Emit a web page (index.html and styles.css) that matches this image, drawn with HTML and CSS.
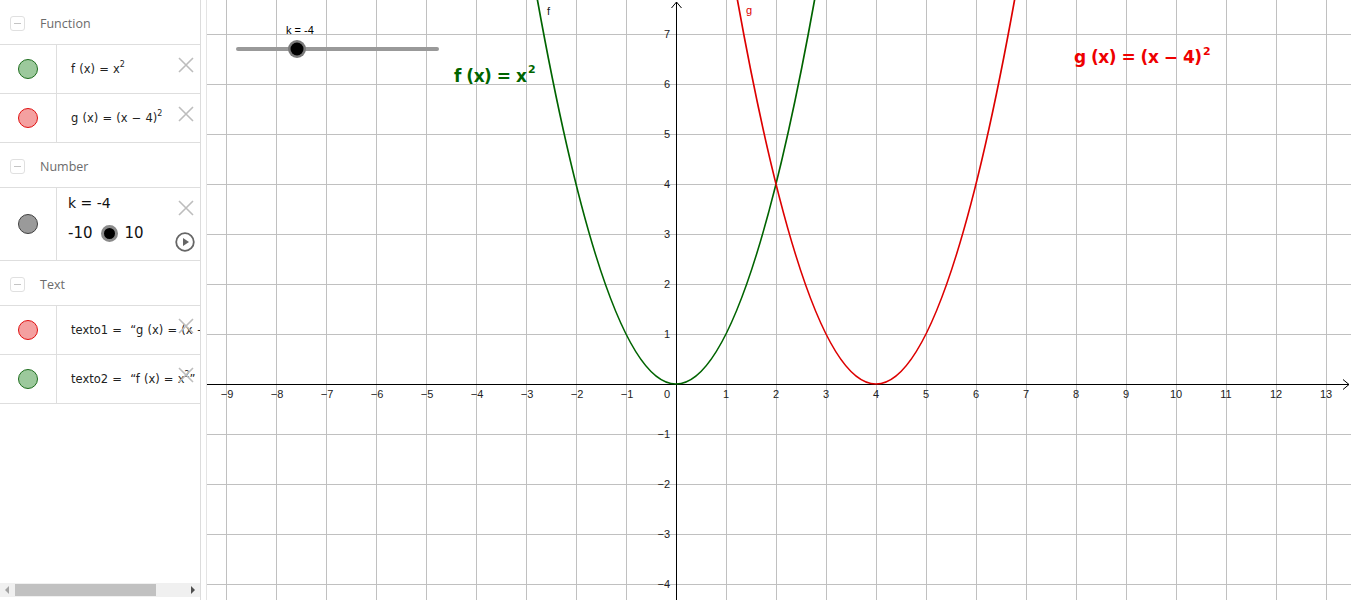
FILE: index.html
```html
<!DOCTYPE html>
<html>
<head>
<meta charset="utf-8">
<link rel="stylesheet" href="styles.css">
</head>
<body>
<div class="app">
  <aside class="algebra">
    <div class="list">
      <div class="group-header"><span class="collapse"></span><span class="group-title">Function</span></div>
      <div class="item">
        <div class="marker"><span class="dot dot-green"></span></div>
        <div class="expr">f (x) = x<sup>2</sup></div>
        <svg class="del" viewBox="0 0 16 16"><path d="M1 1L15 15M15 1L1 15"/></svg>
      </div>
      <div class="item">
        <div class="marker"><span class="dot dot-red"></span></div>
        <div class="expr">g (x) = (x − 4)<sup>2</sup></div>
        <svg class="del" viewBox="0 0 16 16"><path d="M1 1L15 15M15 1L1 15"/></svg>
      </div>
      <div class="group-header"><span class="collapse"></span><span class="group-title">Number</span></div>
      <div class="item item-slider">
        <div class="marker"><span class="dot dot-gray"></span></div>
        <div class="slider-expr">
          <div class="k-line">k = -4</div>
          <div class="range-line"><span>-10</span><span class="knob"></span><span>10</span></div>
        </div>
        <svg class="del" viewBox="0 0 16 16"><path d="M1 1L15 15M15 1L1 15"/></svg>
        <svg class="play" viewBox="0 0 20 20"><circle cx="10" cy="10" r="8.8"/><path d="M8 6L14 10L8 14Z"/></svg>
      </div>
      <div class="group-header"><span class="collapse"></span><span class="group-title">Text</span></div>
      <div class="item">
        <div class="marker"><span class="dot dot-red"></span></div>
        <div class="expr">texto1 =  “g (x) = (x − 4)<sup>2</sup>”</div>
        <svg class="del" viewBox="0 0 16 16"><path d="M1 1L15 15M15 1L1 15"/></svg>
      </div>
      <div class="item">
        <div class="marker"><span class="dot dot-green"></span></div>
        <div class="expr">texto2 =  “f (x) = x<sup>2</sup>”</div>
        <svg class="del" viewBox="0 0 16 16"><path d="M1 1L15 15M15 1L1 15"/></svg>
      </div>
    </div>
    <div class="hscroll">
      <span class="arrow-left"></span>
      <span class="thumb"></span>
      <span class="arrow-right"></span>
    </div>
  </aside>
  <div class="splitter"></div>
  <main class="graphics">
    <svg class="canvas" width="1144" height="600" viewBox="208 0 1144 600">
      <path class="grid" d="M227.5 0V600M277.5 0V600M327.5 0V600M377.5 0V600M427.5 0V600M477.5 0V600M527.5 0V600M577.5 0V600M627.5 0V600M727.5 0V600M777.5 0V600M827.5 0V600M877.5 0V600M927.5 0V600M977.5 0V600M1027.5 0V600M1077.5 0V600M1127.5 0V600M1177.5 0V600M1227.5 0V600M1277.5 0V600M1327.5 0V600M208 34.5H1352M208 84.5H1352M208 134.5H1352M208 184.5H1352M208 234.5H1352M208 284.5H1352M208 334.5H1352M208 434.5H1352M208 484.5H1352M208 534.5H1352M208 584.5H1352"/>
      <path class="axis" d="M208 384.5H1350M1344 379.5L1350 384.5L1344 389.5M677.5 600V2M672.5 8L677.5 2L682.5 8"/>
      <g class="xlabels">
        <text x="228" y="398">−9</text>
        <text x="278" y="398">−8</text>
        <text x="328" y="398">−7</text>
        <text x="378" y="398">−6</text>
        <text x="428" y="398">−5</text>
        <text x="478" y="398">−4</text>
        <text x="528" y="398">−3</text>
        <text x="578" y="398">−2</text>
        <text x="628" y="398">−1</text>
        <text x="668" y="398">0</text>
        <text x="727" y="398">1</text>
        <text x="777" y="398">2</text>
        <text x="827" y="398">3</text>
        <text x="877" y="398">4</text>
        <text x="927" y="398">5</text>
        <text x="977" y="398">6</text>
        <text x="1027" y="398">7</text>
        <text x="1077" y="398">8</text>
        <text x="1127" y="398">9</text>
        <text x="1177" y="398">10</text>
        <text x="1227" y="398">11</text>
        <text x="1277" y="398">12</text>
        <text x="1327" y="398">13</text>
      </g>
      <g class="ylabels">
        <text x="671" y="38">7</text>
        <text x="671" y="88">6</text>
        <text x="671" y="138">5</text>
        <text x="671" y="188">4</text>
        <text x="671" y="238">3</text>
        <text x="671" y="288">2</text>
        <text x="671" y="338">1</text>
        <text x="671" y="438">−1</text>
        <text x="671" y="488">−2</text>
        <text x="671" y="538">−3</text>
        <text x="671" y="588">−4</text>
      </g>
      <path class="curve-f" d="M537 -8Q677 776 817 -8"/>
      <path class="curve-g" d="M737 -8Q877 776 1017 -8"/>
      <text class="lbl-f" x="548" y="15">f</text>
      <text class="lbl-g" x="747" y="14">g</text>
      <line class="slider-track" x1="239" y1="49" x2="438" y2="49"/>
      <circle class="slider-halo" cx="298" cy="49" r="9"/>
      <circle class="slider-knob" cx="298" cy="49" r="6.5"/>
      <text class="slider-label" x="287" y="34">k = -4</text>
      <text class="big big-f" x="455" y="82" textLength="73" lengthAdjust="spacing" xml:space="preserve">f (x) = x</text>
      <text class="big big-f sup" x="529" y="73">2</text>
      <text class="big big-g" x="1075" y="63" textLength="128" lengthAdjust="spacing" xml:space="preserve">g (x) = (x − 4)</text>
      <text class="big big-g sup" x="1204" y="55">2</text>
    </svg>
  </main>
</div>
</body>
</html>
```
FILE: styles.css
```css
* { box-sizing: border-box; }
html, body { margin: 0; padding: 0; background: #fff; }
body { width: 1352px; height: 600px; overflow: hidden; font-family: "Open Sans", "DejaVu Sans", sans-serif; }

.app { display: flex; height: 600px; }

.algebra {
  width: 201px;
  flex: 0 0 201px;
  border-right: 1px solid #dcdcdc;
  display: flex;
  flex-direction: column;
  padding-bottom: 3px;
}
.list { flex: 1; overflow: hidden; }

.group-header {
  height: 45px;
  border-bottom: 1px solid #dedede;
  display: flex;
  align-items: center;
  padding: 3px 0 0 10px;
}
.collapse {
  width: 15px; height: 15px;
  border: 1px solid #e0e0e0;
  border-radius: 3px;
  position: relative;
  flex: 0 0 15px;
}
.collapse::after {
  content: "";
  position: absolute;
  left: 3px; right: 3px; top: 6px;
  height: 1px;
  background: #c4c4c4;
}
.group-title {
  margin-left: 15px;
  font-size: 12.5px;
  color: #6b6b6b;
  margin-top: -1px;
}

.item {
  height: 49px;
  border-bottom: 1px solid #dedede;
  display: flex;
  position: relative;
}
.marker {
  width: 57px;
  flex: 0 0 57px;
  border-right: 1px solid #dedede;
  display: flex;
  align-items: center;
  justify-content: center;
}
.dot {
  width: 20px; height: 20px;
  border-radius: 50%;
  display: block;
}
.dot-green { background: #9cc99c; border: 1px solid #1e6e1e; }
.dot-red { background: #f4a0a0; border: 1px solid #e01010; }
.dot-gray { background: #9a9a9a; border: 1px solid #404040; }

.expr {
  padding-left: 14px;
  display: flex;
  align-items: center;
  white-space: pre;
  overflow: hidden;
  font-family: "DejaVu Sans", sans-serif;
  font-size: 11.5px;
  color: #222;
  word-spacing: 0.5px;
}
.expr sup { font-size: 8px; position: relative; top: -5px; vertical-align: baseline; }

.del {
  position: absolute;
  right: 6px;
  top: 12px;
  width: 16px; height: 16px;
}
.del path { stroke: #bdbdbd; stroke-width: 1.6; fill: none; }

.item-slider { height: 73px; }
.slider-expr {
  padding-left: 11px;
  padding-top: 5px;
  font-family: "DejaVu Sans", sans-serif;
  color: #111;
}
.k-line { font-size: 14px; line-height: 20px; }
.range-line {
  display: flex;
  align-items: center;
  font-size: 15px;
  margin-top: 10px;
  line-height: 20px;
}
.knob {
  width: 17px; height: 17px;
  border-radius: 50%;
  background: #000;
  border: 3px solid #8a8a8a;
  margin: 0 7px 0 8px;
}
.play {
  position: absolute;
  right: 5px;
  top: 44px;
  width: 20px; height: 20px;
}
.play circle { fill: none; stroke: #666; stroke-width: 1.8; }
.play path { fill: #666; }

.hscroll {
  height: 14px;
  background: #f0f0f0;
  display: flex;
  align-items: center;
  padding: 0 5px;
}
.arrow-left {
  width: 0; height: 0;
  border-top: 4px solid transparent;
  border-bottom: 4px solid transparent;
  border-right: 4px solid #a3a3a3;
}
.thumb {
  width: 141px;
  height: 12px;
  background: #c1c1c1;
  margin-left: 6px;
}
.arrow-right {
  margin-left: auto;
  width: 0; height: 0;
  border-top: 4px solid transparent;
  border-bottom: 4px solid transparent;
  border-left: 4px solid #505050;
}

.splitter {
  width: 6px;
  flex: 0 0 6px;
  background: #fff;
  border-right: 1px solid #e4e4e4;
}
.graphics { flex: 1; overflow: hidden; }
.canvas { display: block; }

.grid { stroke: #c0c0c0; stroke-width: 1; fill: none; shape-rendering: crispEdges; }
.axis { stroke: #000; stroke-width: 1; fill: none; }
.xlabels text, .ylabels text {
  font-family: "Liberation Sans", sans-serif;
  font-size: 11px;
  fill: #222;
}
.xlabels text { text-anchor: middle; }
.ylabels text { text-anchor: end; }
.curve-f { stroke: #006400; stroke-width: 1.7; fill: none; }
.curve-g { stroke: #dd0000; stroke-width: 1.7; fill: none; }
.lbl-f, .lbl-g { font-family: "Liberation Sans", sans-serif; font-size: 11px; }
.lbl-f { fill: #1a1a1a; }
.lbl-g { fill: #dd0000; }
.slider-track { stroke: #999; stroke-width: 4; stroke-linecap: round; }
.slider-halo { fill: #7a7a7a; }
.slider-knob { fill: #000; }
.slider-label { font-family: "Liberation Sans", sans-serif; font-size: 11px; fill: #000; }
.big { font-family: "DejaVu Sans", sans-serif; font-weight: bold; font-size: 17px; white-space: pre; }
.big.sup { font-size: 11px; }
.big-f { fill: #006400; }
.big-g { fill: #ee0000; }
```
